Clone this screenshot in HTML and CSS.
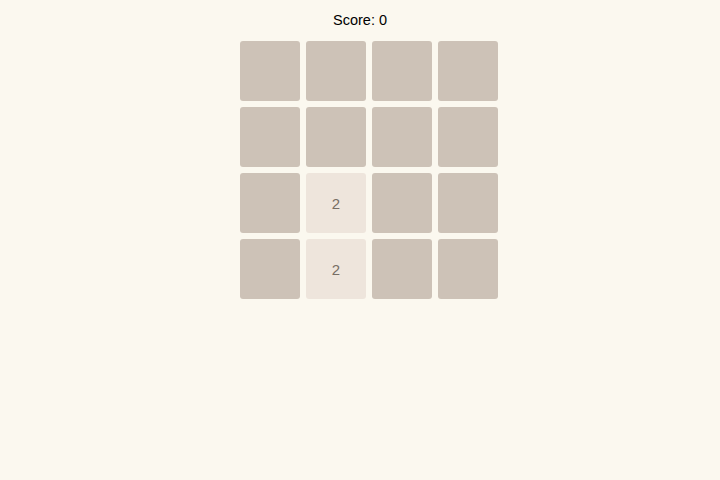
FILE: index.html
```html
<!DOCTYPE html>
<html>
<head>
<meta charset="utf-8">
<link rel="stylesheet" href="styles.css">
</head>
<body>
<div class="score">Score: 0</div>
<div class="board">
  <div class="tile"></div><div class="tile"></div><div class="tile"></div><div class="tile"></div>
  <div class="tile"></div><div class="tile"></div><div class="tile"></div><div class="tile"></div>
  <div class="tile"></div><div class="tile t2">2</div><div class="tile"></div><div class="tile"></div>
  <div class="tile"></div><div class="tile t2">2</div><div class="tile"></div><div class="tile"></div>
</div>
</body>
</html>
```
FILE: styles.css
```css
html, body {
  margin: 0;
  padding: 0;
  background: #fbf8ef;
  font-family: "Liberation Sans", Arial, sans-serif;
}
.score {
  text-align: center;
  font-size: 14.5px;
  line-height: 18px;
  padding-top: 11px;
  color: #000;
}
.board {
  display: grid;
  grid-template-columns: repeat(4, 60px);
  grid-auto-rows: 60px;
  gap: 6px;
  width: 258px;
  margin-top: 12px;
  margin-left: calc(50% - 120px);
}
.tile {
  background: #cdc2b7;
  border-radius: 3px;
  display: flex;
  align-items: center;
  justify-content: center;
  font-size: 15px;
  color: #776e65;
}
.t2 {
  background: #eee5dc;
}
```
